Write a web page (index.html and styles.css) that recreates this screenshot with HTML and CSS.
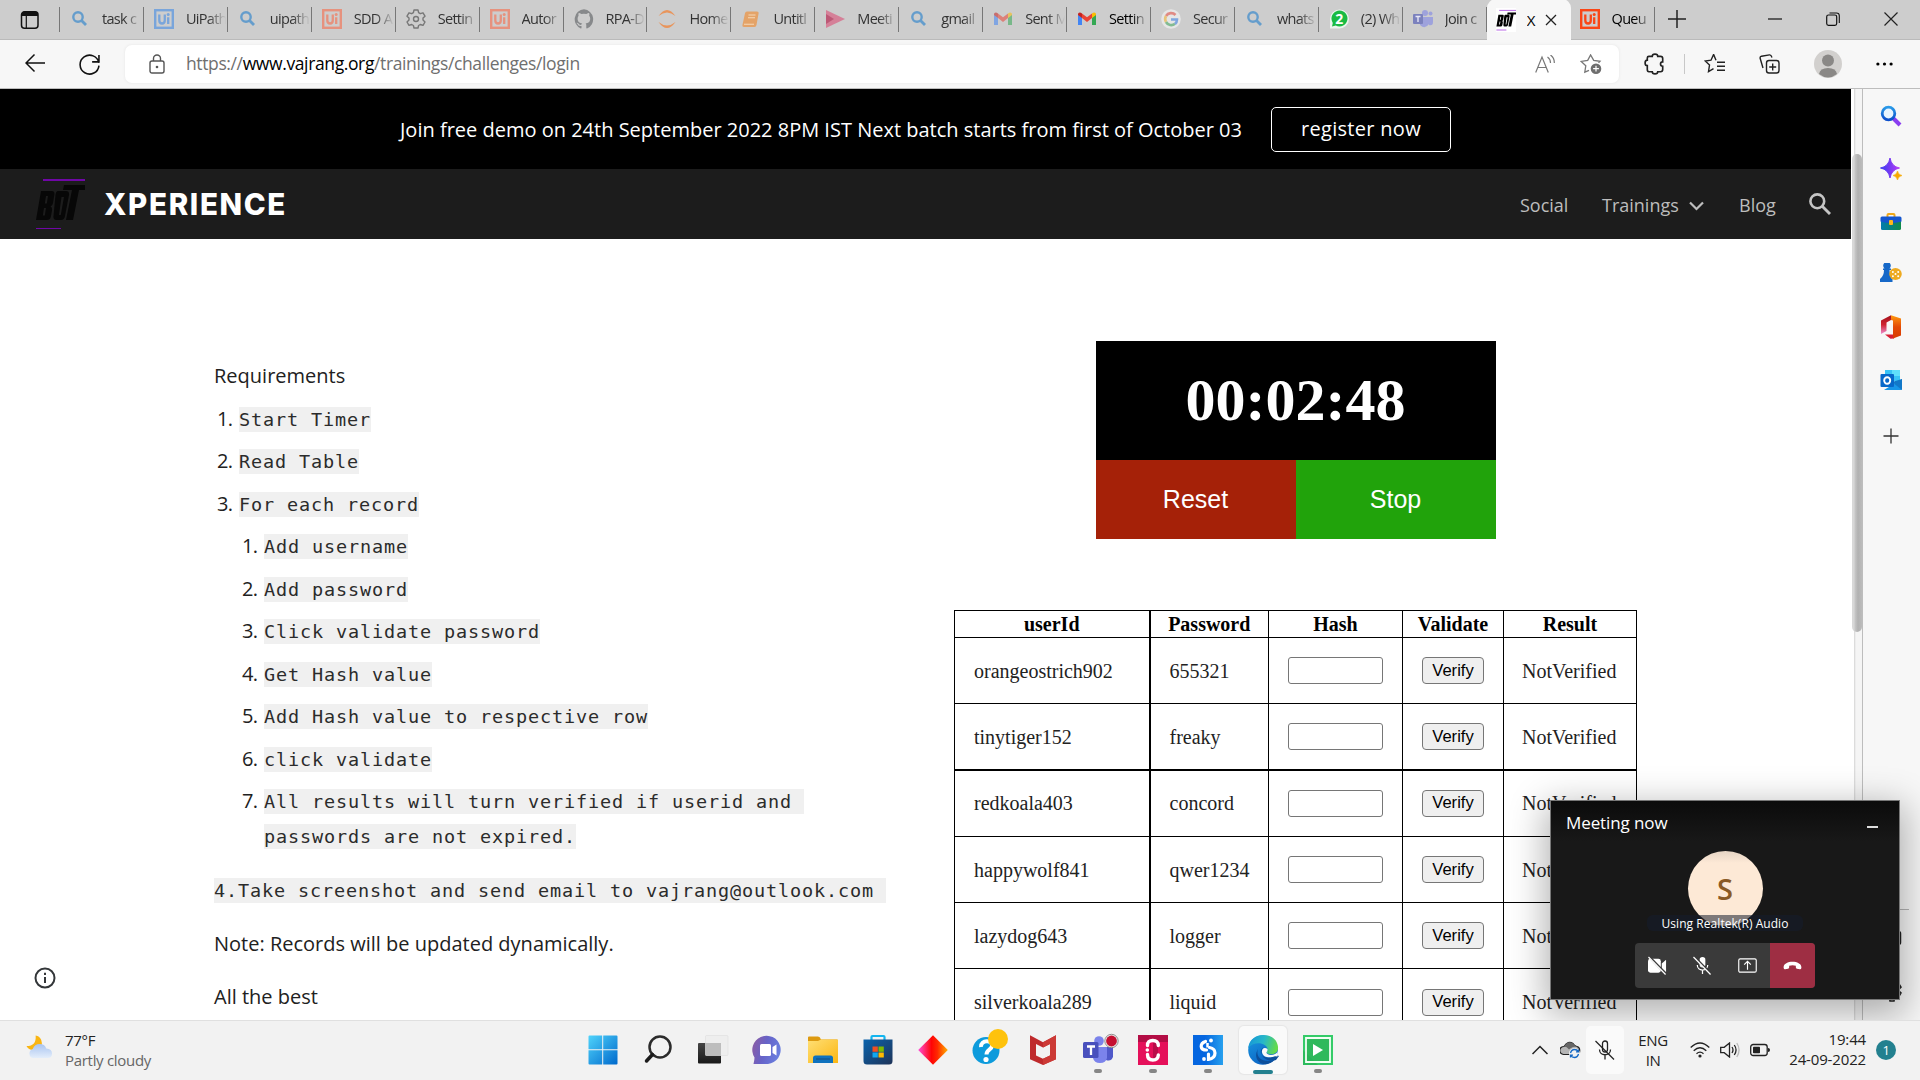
FILE: index.html
```html
<!DOCTYPE html>
<html lang="en">
<head>
<meta charset="utf-8">
<title>Xperience - Login challenge</title>
<link rel="stylesheet" href="styles.css">
</head>
<body>
<svg class="defs" width="0" height="0" aria-hidden="true">
  <defs>
    <linearGradient id="gWin" x1="0" y1="0" x2="1" y2="1"><stop offset="0" stop-color="#4fd3fb"/><stop offset="1" stop-color="#0069cc"/></linearGradient>
    <linearGradient id="gDark" x1="0" y1="0" x2="0" y2="1"><stop offset="0" stop-color="#454545"/><stop offset="1" stop-color="#191919"/></linearGradient>
    <linearGradient id="gChat" x1="0" y1="0.3" x2="1" y2="0.6"><stop offset="0" stop-color="#8a5ca6"/><stop offset="0.45" stop-color="#6663c8"/><stop offset="1" stop-color="#6a80e0"/></linearGradient>
    <linearGradient id="gFold" x1="0" y1="0" x2="1" y2="1"><stop offset="0" stop-color="#ffdf75"/><stop offset="1" stop-color="#fbb612"/></linearGradient>
    <linearGradient id="gStore" x1="0" y1="0" x2="1" y2="1"><stop offset="0" stop-color="#0b64ad"/><stop offset="1" stop-color="#1e3358"/></linearGradient>
    <linearGradient id="gDia" x1="0" y1="0" x2="1" y2="0"><stop offset="0" stop-color="#ff4fd8"/><stop offset="0.45" stop-color="#ff0505"/><stop offset="0.65" stop-color="#ff2a00"/><stop offset="1" stop-color="#ffb000"/></linearGradient>
    <linearGradient id="gEdgeTop" x1="0" y1="0.3" x2="1" y2="0.5"><stop offset="0" stop-color="#1797d8"/><stop offset="0.5" stop-color="#27b8c8"/><stop offset="1" stop-color="#66dc44"/></linearGradient>
    <linearGradient id="gEdge" x1="0" y1="0" x2="0.6" y2="1"><stop offset="0" stop-color="#1a9ae0"/><stop offset="1" stop-color="#0b62c4"/></linearGradient>
    <linearGradient id="gSpark" x1="0" y1="0" x2="1" y2="0"><stop offset="0" stop-color="#3a3af0"/><stop offset="1" stop-color="#b63cf5"/></linearGradient>
    <linearGradient id="gLens" x1="0" y1="0" x2="0" y2="1"><stop offset="0" stop-color="#2a9ae8"/><stop offset="1" stop-color="#0b4ecb"/></linearGradient>
    <linearGradient id="gCase" x1="0" y1="0" x2="1" y2="0"><stop offset="0" stop-color="#007bb0"/><stop offset="1" stop-color="#108a4a"/></linearGradient>
    <linearGradient id="gOffL" x1="0" y1="0" x2="0" y2="1"><stop offset="0" stop-color="#a3121c"/><stop offset="0.5" stop-color="#cf2330"/><stop offset="1" stop-color="#ee8fd0"/></linearGradient>
    <linearGradient id="gOffR" x1="0" y1="0" x2="0" y2="1"><stop offset="0" stop-color="#ff9a10"/><stop offset="0.5" stop-color="#e34a06"/><stop offset="1" stop-color="#d83b01"/></linearGradient>
    <linearGradient id="gCloud" x1="0" y1="0" x2="0" y2="1"><stop offset="0" stop-color="#a9c4f0"/><stop offset="1" stop-color="#e4eefb"/></linearGradient>
    <linearGradient id="gBlue" x1="0" y1="0" x2="1" y2="0"><stop offset="0.4" stop-color="#0566e0"/><stop offset="1" stop-color="#27a0ee"/></linearGradient>
    <symbol id="i-find" viewBox="0 0 20 20"><circle cx="8" cy="8" r="4.7" fill="none" stroke="#659dcc" stroke-width="2.4"/><path d="M11.5 11.5l4.5 4.5" stroke="#659dcc" stroke-width="2.8"/></symbol>
    <symbol id="i-ui" viewBox="0 0 20 20"><rect x="1.2" y="1.2" width="17.6" height="17.6" fill="none" stroke="currentColor" stroke-width="2.4"/><path d="M5.3 5.5v5.7c0 4.4 5.5 4.4 5.5 0V5.5M14.2 8.3v6.6" fill="none" stroke="currentColor" stroke-width="2.3"/><circle cx="14.2" cy="5.6" r="1.5" fill="currentColor"/></symbol>
    <symbol id="i-gmail" viewBox="0 0 20 20"><path d="M1 5v11h4V8.5z" fill="#4285f4"/><path d="M15 8.5V16h4V5z" fill="#34a853"/><path d="M5 9V4.5l5 3.8 5-3.8V9l-5 4z" fill="#ea4335"/><path d="M15 9V4.5c2-2 4-1 4 1V6z" fill="#fbbc04"/><path d="M5 9V4.5c-2-2-4-1-4 1V6z" fill="#c5221f"/></symbol>
    <symbol id="i-bot" viewBox="0 0 50 50"><path d="M8 1h43M1 50h25" stroke="#8a00d4" stroke-width="1.500"/><path fill-rule="evenodd" fill="currentColor" d="M6 12h11q3 0 2.300 4l-1.300 8q-.5 3-2.500 3.500q2 .8 1.500 4l-1.200 6.500q-.7 3-4 3H1zM11 17l-1.200 7.500h2L13 17zM9 29l-1.200 7.500h2L11 29zM23 12h8q3.500 0 3 4l-4 21q-.7 4-4 4h-4.500q-3.500 0-3-4l2-21q.5-4 2.500-4zM26.500 18l-2.500 18h1.800L29 18zM29 6h22l-1 5h-6l-6 30h-7l6-30h-9z"/></symbol>
    <symbol id="i-mic" viewBox="0 0 20 20"><rect x="7" y="1" width="6" height="11" rx="3" fill="currentColor"/><path d="M4.5 9.5c0 7 11 7 11 0M10 15v4" stroke="currentColor" stroke-width="1.3" fill="none"/></symbol>
  </defs>
</svg>

<div class="browser">
  <header class="tabs">
    <div class="tab-actions"><svg width="20" height="20" viewBox="0 0 20 20"><rect x="1.500" y="1.800" width="16.500" height="16.500" rx="3" fill="none" stroke="#111" stroke-width="1.500"/><path d="M1.500 6V4q0-2.500 3-2.500h10.500q3 0 3 2.500v2zM5.700 6h1.200v12H5.700z" fill="#111"/></svg></div>
    <div class="tab asleep"><svg><use href="#i-find"/></svg><span>task c</span></div>
    <div class="tab asleep ui-blue"><svg><use href="#i-ui"/></svg><span>UiPath</span></div>
    <div class="tab asleep"><svg><use href="#i-find"/></svg><span>uipath</span></div>
    <div class="tab asleep ui-faded"><svg><use href="#i-ui"/></svg><span>SDD A</span></div>
    <div class="tab asleep"><svg viewBox="0 0 20 20"><path d="M8 1h4l.6 2.700 1.700 1 2.700-.9 2 3.400-2 1.900v2l2 1.900-2 3.400-2.700-.9-1.700 1L12 19H8l-.6-2.500-1.700-1-2.700.9-2-3.400 2-1.900v-2L1 7.200l2-3.400 2.700.9 1.700-1z" fill="none" stroke="#777" stroke-width="1.400" stroke-linejoin="round"/><circle cx="10" cy="10" r="2.500" fill="none" stroke="#777" stroke-width="1.400"/></svg><span>Settin</span></div>
    <div class="tab asleep ui-faded"><svg><use href="#i-ui"/></svg><span>Autor</span></div>
    <div class="tab asleep"><svg viewBox="0 0 20 20"><path fill="#87898b" d="M10 .3a10 10 0 0 0-3.200 19.200c.5.1.7-.2.7-.5v-2c-2.800.6-3.400-1.200-3.400-1.200-.4-1.100-1.100-1.400-1.100-1.400-.9-.6.100-.6.100-.6 1 .1 1.500 1 1.500 1 .9 1.500 2.400 1.100 2.900.8.100-.6.400-1.100.7-1.300-2.200-.3-4.600-1.100-4.600-4.900 0-1.100.4-2 1-2.700-.1-.300-.4-1.300.1-2.700 0 0 .8-.3 2.700 1a9.400 9.400 0 0 1 5 0c1.900-1.300 2.700-1 2.700-1 .5 1.400.2 2.400.1 2.700.6.700 1 1.600 1 2.700 0 3.800-2.300 4.700-4.600 4.900.4.300.7.900.7 1.900v2.800c0 .3.200.6.700.5A10 10 0 0 0 10 .3z"/></svg><span>RPA-D</span></div>
    <div class="tab asleep"><svg viewBox="0 0 20 20"><path d="M1.500 7Q10-5 18.500 7 10 0 1.500 7zM1.500 13Q10 25 18.500 13 10 20 1.500 13z" fill="#e8955c"/></svg><span>Home</span></div>
    <div class="tab asleep"><svg viewBox="0 0 20 20"><path d="M6 2.500h10q2 0 1.600 1.800L15.500 16q-.4 2-2 2H3q-2 0-1.600-1.800L4 4.200q.4-1.700 2-1.700z" fill="#e4a368"/><path d="M7.500 6h7M7 8.800h7M3 15.300h10" stroke="#f5d9b8" stroke-width="1.100"/></svg><span>Untitl</span></div>
    <div class="tab asleep"><svg viewBox="0 0 20 20"><path d="M1 1l19 9-19 9z" fill="#d58098"/><path d="M1 5l8 5-8 5z" fill="#bd5876"/></svg><span>Meeti</span></div>
    <div class="tab asleep"><svg><use href="#i-find"/></svg><span>gmail</span></div>
    <div class="tab asleep"><svg class="dim"><use href="#i-gmail"/></svg><span>Sent M</span></div>
    <div class="tab"><svg><use href="#i-gmail"/></svg><span>Settin</span></div>
    <div class="tab asleep"><svg viewBox="0 0 20 20"><circle cx="10" cy="10" r="9.800" fill="#e6e6e6"/><g fill="none" stroke-width="2.600"><path d="M14.500 6A6 6 0 0 0 5 7" stroke="#e08a84"/><path d="M5 7a6 6 0 0 0 0 6" stroke="#e8c47a"/><path d="M5 13a6 6 0 0 0 9 1.800" stroke="#83bb92"/><path d="M14 15a6 6 0 0 0 2-4.500h-6" stroke="#7fa6e0"/></g></svg><span>Secur</span></div>
    <div class="tab asleep"><svg><use href="#i-find"/></svg><span>whats</span></div>
    <div class="tab asleep"><svg viewBox="0 0 20 20"><path d="M1 19.500V10A9.500 9.500 0 1 1 10 19.500H6z" fill="#eaf5ed"/><path d="M3 17.500l.8-3.600a8 8 0 1 1 3 2.700z" fill="#19bb43"/><text x="10" y="14.800" text-anchor="middle" font-family="Open Sans, sans-serif" font-weight="700" font-size="14" fill="#fff">2</text></svg><span>(2) Wh</span></div>
    <div class="tab asleep"><svg viewBox="0 0 20 20"><circle cx="12" cy="4" r="3" fill="#9ea2dc"/><circle cx="17.500" cy="4.500" r="2" fill="#9ea2dc"/><path d="M7 8h9v7q-4 6-9 1zM16 8h4v5q0 4-4 3z" fill="#9ea2dc"/><rect y="5" width="10" height="10" rx="1" fill="#7b81bd"/><path d="M2.500 7.500h5M5 7.500V13" stroke="#e6e6f5" stroke-width="1.400"/></svg><span>Join c</span></div>
    <div class="tab active"><svg class="bot-fav"><use href="#i-bot"/></svg><span>X</span><svg class="tab-close" viewBox="0 0 12 12"><path d="M1 1l10 10M11 1L1 11" stroke="#222" stroke-width="1.300"/></svg></div>
    <div class="tab ui-live"><svg><use href="#i-ui"/></svg><span>Queu</span></div>
    <svg class="new-tab" viewBox="0 0 18 18"><path d="M9 0v18M0 9h18" stroke="#222" stroke-width="1.500"/></svg>
    <div class="window-buttons">
      <svg viewBox="0 0 14 14"><path d="M0 7h14" stroke="#111" stroke-width="1.200"/></svg>
      <svg viewBox="0 0 14 14"><rect x=".7" y="3" width="10" height="10.300" rx="1.800" fill="none" stroke="#111" stroke-width="1.200"/><path d="M3.500 1h7q2.800 0 2.800 2.800V11" fill="none" stroke="#111" stroke-width="1.100"/></svg>
      <svg viewBox="0 0 14 14"><path d="M.5.5l13 13M13.500.5l-13 13" stroke="#222" stroke-width="1.200"/></svg>
    </div>
  </header>

  <div class="toolbar">
    <svg class="back" viewBox="0 0 20 20"><path d="M20 10H1M9.500 1.500L1 10l8.500 8.500" fill="none" stroke="#111" stroke-width="1.500"/></svg>
    <svg class="reload" viewBox="0 0 20 20"><path d="M18.900 8.500A9 9 0 1 0 19 11M19 1v6.500h-6.500" fill="none" stroke="#111" stroke-width="1.500"/></svg>
    <div class="address">
      <svg class="lock" viewBox="0 0 16 20"><rect x="1" y="7" width="14" height="12" rx="2" fill="none" stroke="#555" stroke-width="1.400"/><path d="M4.500 7V4.500a3.500 3.500 0 0 1 7 0V7" fill="none" stroke="#555" stroke-width="1.400"/><circle cx="8" cy="13" r="1.300" fill="#555"/></svg>
      <span class="url">https://<b>www.vajrang.org</b>/trainings/challenges/login</span>
      <svg class="read" viewBox="0 0 20 18"><path d="M.7 17.500L7 2l6.300 15.500M3 12.500h8M12.500 2q3 2 3 6M15.500 0q4 3 3.800 8" fill="none" stroke="#777" stroke-width="1.200"/></svg>
      <svg class="fav" viewBox="0 0 22 20"><path d="M18.500 8.800L20 7.300l-6.300-.9L10.600.9 7.700 6.400l-6.500 1 4.600 4.300-1 6.500L9 16.300" fill="none" stroke="#777" stroke-width="1.300"/><circle cx="16" cy="14.700" r="5.300" fill="#6e6e6e"/><path d="M16 11.800v5.800M13.100 14.700h5.800" stroke="#fff" stroke-width="1.200"/></svg>
    </div>
    <svg class="ext" viewBox="0 0 20 20"><path d="M4 3h3.500a2.500 2 0 0 1 5 0H15q2 0 2 2v3a2 2 0 0 0 0 4v3q0 2-2 2h-2.500a2.500 2 0 0 1-5 0H4.500q-1.500 0-1.500-2v-3.500a2 2.500 0 0 1 0-5V4.500Q3 3 4.500 3" fill="none" stroke="#222" stroke-width="1.500"/></svg>
    <i class="rule"></i>
    <svg class="favs" viewBox="0 0 21 20"><path d="M12 7L9.600 1.200 7 7l-5.800.8 4.300 4L4.500 18.500 9.500 15.500M13 9h8M13 13h8M13 17h8" transform="translate(0 -.8)" fill="none" stroke="#222" stroke-width="1.400"/></svg>
    <svg class="coll" viewBox="0 0 21 20"><rect x="7.500" y="6.500" width="12.500" height="12.500" rx="2.500" fill="none" stroke="#222" stroke-width="1.400"/><path d="M13.700 9.500v7M10.200 13h7M4 14L1.200 4.500q-.5-1.800 1.300-2.300L10.500.9q1.500-.2 2.500 2.500" fill="none" stroke="#222" stroke-width="1.400"/></svg>
    <svg class="avatar" viewBox="0 0 28 28"><circle cx="14" cy="14" r="14" fill="#d2d0ce"/><circle cx="14" cy="10.500" r="6" fill="#8a8886"/><path d="M5 24q1-6 9-6t9 6q-9 7-18 0z" fill="#8a8886"/></svg>
    <svg class="more" viewBox="0 0 18 4"><circle cx="2" cy="2" r="1.700"/><circle cx="9" cy="2" r="1.700"/><circle cx="16" cy="2" r="1.700"/></svg>
  </div>

  <div class="viewport">
    <main class="site">
      <div class="banner"><span>Join free demo on 24th September 2022 8PM IST Next batch starts from first of October 03</span><a class="register">register now</a></div>
      <nav class="nav">
        <svg class="logo" viewBox="0 0 50 50"><use href="#i-bot"/></svg>
        <h1>XPERIENCE</h1>
        <a class="social">Social</a>
        <a class="trainings">Trainings</a>
        <svg class="chev" viewBox="0 0 15 10"><path d="M1 1.500l6.500 6.500L14 1.500" fill="none" stroke="#bdbdbd" stroke-width="2.200"/></svg>
        <a class="blog">Blog</a>
        <svg class="site-search" viewBox="0 0 22 22"><circle cx="8.300" cy="8.300" r="6.900" fill="none" stroke="#c4c4c4" stroke-width="2.600"/><path d="M13 13l8 8" stroke="#c4c4c4" stroke-width="2.900"/></svg>
      </nav>
      <div class="content">
        <section class="text">
          <p class="lead">Requirements</p>
          <ol>
            <li><code>Start Timer</code></li>
            <li><code>Read Table</code></li>
            <li><code>For each record</code>
              <ol>
                <li><code>Add username</code></li>
                <li><code>Add password</code></li>
                <li><code>Click validate password</code></li>
                <li><code>Get Hash value</code></li>
                <li><code>Add Hash value to respective row</code></li>
                <li><code>click validate</code></li>
                <li><code>All results will turn verified if userid and <br>passwords are not expired.</code></li>
              </ol>
            </li>
          </ol>
          <p class="mail"><code>4.Take screenshot and send email to vajrang@outlook.com </code></p>
          <p class="note">Note: Records will be updated dynamically.</p>
          <p class="best">All the best</p>
        </section>
        <svg class="info" viewBox="0 0 22 22"><circle cx="11" cy="11" r="9.500" fill="none" stroke="#333639" stroke-width="2"/><path d="M11 10v6M11 5.800v2.100" stroke="#333639" stroke-width="2"/></svg>
        <section class="challenge">
          <div class="timer">
            <div class="time">00:02:48</div>
            <button class="reset">Reset</button><button class="stop">Stop</button>
          </div>
          <table>
            <thead><tr><th>userId</th><th>Password</th><th>Hash</th><th>Validate</th><th>Result</th></tr></thead>
            <tbody>
              <tr><td>orangeostrich902</td><td>655321</td><td><input></td><td><button>Verify</button></td><td>NotVerified</td></tr>
              <tr class="thick"><td>tinytiger152</td><td>freaky</td><td><input></td><td><button>Verify</button></td><td>NotVerified</td></tr>
              <tr><td>redkoala403</td><td>concord</td><td><input></td><td><button>Verify</button></td><td>NotVerified</td></tr>
              <tr><td>happywolf841</td><td>qwer1234</td><td><input></td><td><button>Verify</button></td><td>NotVerified</td></tr>
              <tr><td>lazydog643</td><td>logger</td><td><input></td><td><button>Verify</button></td><td>NotVerified</td></tr>
              <tr><td>silverkoala289</td><td>liquid</td><td><input></td><td><button>Verify</button></td><td>NotVerified</td></tr>
            </tbody>
          </table>
        </section>
      </div>
    </main>
    <div class="scroll"><i></i></div>
    <aside class="sidebar">
      <svg viewBox="0 0 22 22"><path d="M13 13l7 7" stroke="#8a3df0" stroke-width="4"/><circle cx="8.500" cy="8.500" r="6.300" fill="#e8f5ff" stroke="url(#gLens)" stroke-width="2.800"/></svg>
      <svg viewBox="0 0 22 22"><path d="M10 0q1.500 8.500 9.500 10-8 1.500-9.500 10Q8.500 11.500.5 10 8.500 8.500 10 0z" fill="url(#gSpark)" stroke="url(#gSpark)"/><path d="M17.500 13q.8 4 4.500 4.500-3.700.7-4.500 4.500-.8-3.800-4.500-4.500 3.700-.7 4.500-4.500z" fill="#f7a900" stroke="#f7a900" stroke-width=".6"/></svg>
      <svg viewBox="0 0 22 22"><path d="M7.500 6V4q0-1 1-1h5q1 0 1 1v2" fill="none" stroke="#f0a818" stroke-width="2"/><rect x="1" y="9" width="20" height="10" rx="1.500" fill="url(#gCase)"/><path d="M.5 7q0-1.500 1.500-1.500h18q1.500 0 1.500 1.500v3.500q-10.500 3-21 0z" fill="#1556cf"/><rect x="9" y="9" width="4" height="5" rx="1" fill="#ffb71b"/></svg>
      <svg viewBox="0 0 22 22"><path d="M4 7H3V5.500h1.500a3.800 3.800 0 1 1 5 0H11V7h-1.500q0 5 3 8v4H0v-3q4-3 4-9z" fill="#1668c8"/><ellipse cx="15.500" cy="11" rx="6.300" ry="6" fill="#eeaa20"/><g fill="#fff"><circle cx="15.500" cy="11" r="1"/><circle cx="12.900" cy="9" r="1"/><circle cx="18.200" cy="9" r="1"/><circle cx="12.900" cy="13.300" r="1"/><circle cx="18.200" cy="13.300" r="1"/></g></svg>
      <svg class="office" viewBox="0 0 22 24"><path d="M1 5.500L11 .3v4.800L6.500 7.500V16L1 19z" fill="url(#gOffL)"/><path d="M5 19.500h8v-2l3-1-2 7-3.500.2z" fill="#d71f35"/><path d="M11 .3l10 3.200v17L13 23.600V5.500L11 5z" fill="url(#gOffR)"/></svg>
      <svg viewBox="0 0 22 22"><path d="M5 1h14q1 0 1 1v10H5z" fill="#39c4f6"/><path d="M12 1h7q1 0 1 1v5h-8z" fill="#5fe0fb"/><path d="M4 21l18-11v10q0 1-1 1z" fill="#1896e8"/><path d="M12 13l10 8V10z" fill="#1278c8"/><rect x=".5" y="5" width="13.500" height="13" rx="1" fill="#0768c9"/><ellipse cx="7.200" cy="11.500" rx="3" ry="3.300" fill="none" stroke="#fff" stroke-width="1.900"/></svg>
      <svg class="plus" viewBox="0 0 22 22"><path d="M11 3.500v15M3.500 11h15" stroke="#333" stroke-width="1.300"/></svg>
      <i class="side-rule"></i>
      <svg class="side-panel" viewBox="0 0 22 22"><rect x="1.500" y="4.500" width="18" height="13" rx="2" fill="none" stroke="#222" stroke-width="1.500"/></svg>
      <svg class="side-gear" viewBox="0 0 22 22"><path d="M9 1h4l.6 2.700 1.700 1 2.700-.9 2 3.400-2 1.900v2l2 1.900-2 3.400-2.700-.9-1.700 1L13 21H9l-.6-3.500-1.700-1-2.700.9-2-3.400 2-1.900v-2L2 8l2-3.400 2.700.9 1.700-1z" fill="none" stroke="#222" stroke-width="1.500"/></svg>
    </aside>
  </div>
</div>

<div class="meeting">
  <div class="meet-title"><span>Meeting now</span><i></i></div>
  <div class="person">S</div>
  <div class="device">Using Realtek(R) Audio</div>
  <div class="controls">
    <div><svg viewBox="0 0 20 20"><rect x="0" y="3" width="13.500" height="14.500" rx="2.500" fill="#fff"/><path d="M14.500 8l4.500-4v13l-4.500-4z" fill="#fff"/><path d="M1 .5l18.500 19" stroke="#3a3a3a" stroke-width="2.600"/><path d="M.5 1l18 18.500" stroke="#fff" stroke-width="1.300"/></svg></div>
    <div><svg viewBox="0 0 20 20"><use href="#i-mic"/><path d="M1 .5l18.500 19" stroke="#3a3a3a" stroke-width="2.600"/><path d="M.5 1l18 18.500" stroke="#fff" stroke-width="1.300"/></svg></div>
    <div><svg viewBox="0 0 20 20"><rect x=".8" y="3" width="18.400" height="14" rx="1.500" fill="none" stroke="#fff" stroke-width="1.200"/><path d="M10 14.500V6M6.500 9L10 5.500 13.500 9" fill="none" stroke="#fff" stroke-width="1.200"/></svg></div>
    <div class="hang"><svg viewBox="0 0 20 20"><path d="M.7 12.700C-.5 4 20.500 4 19.300 12.700q-.3 1.500-1.600 1.200l-3-.6q-1.200-.3-1.200-1.500v-1.500q-3.500-1-7 0v1.500q0 1.200-1.200 1.500l-3 .6q-1.300.3-1.600-1.200z" fill="#fff"/></svg></div>
  </div>
</div>

<footer class="taskbar">
  <svg class="weather" viewBox="0 0 28 24"><path d="M10 0q6 1 6.500 8 0 6-7 7Q3 16 .5 11 11 11 10 0z" fill="#f9b513"/><path d="M7 23.500a5 5 0 0 1 0-9.500q2-5 7-5 5.500 0 7 4.500 6 .5 6 5.300 0 4.700-5 4.700z" fill="url(#gCloud)"/></svg>
  <div class="forecast"><span>77°F</span><span>Partly cloudy</span></div>
  <div class="apps">
    <div><svg viewBox="0 0 30 30"><path d="M.5 1.500q0-1 1-1h12.700v13.700H.5zM15.200.5h13.300q1 0 1 1v12.700H15.200zM.5 15.200h13.700v14.300H1.500q-1 0-1-1zM15.200 15.200h14.300v13.300q0 1-1 1H15.200z" fill="url(#gWin)"/></svg></div>
    <div><svg viewBox="0 0 30 30"><circle cx="17" cy="12" r="10.500" fill="#f3f3f3" stroke="#2c2c2c" stroke-width="2.500"/><path d="M9.500 19.500L3.500 26" stroke="#1c1c1c" stroke-width="3.500" stroke-linecap="round"/></svg></div>
    <div><svg viewBox="0 0 30 30"><rect x="0" y="8" width="23" height="20.500" rx="1" fill="url(#gDark)"/><rect x="7.500" y=".5" width="22.500" height="20" rx="1" fill="#eee" stroke="#ddd" stroke-width=".6"/><path d="M7.500 8H23v12.500H7.500z" fill="#bdbdbd"/></svg></div>
    <div><svg viewBox="0 0 30 30"><path d="M.5 29q1-4 1-6.500A14.200 14.200 0 1 1 15 29z" fill="url(#gChat)"/><rect x="7" y="9" width="11" height="12" rx="1.500" fill="#fff"/><path d="M19.500 12l4-2.500v11l-4-2.500z" fill="#fff"/></svg></div>
    <div><svg viewBox="0 0 30 30"><path d="M0 2.500q0-1 1-1h9q2 0 3 3h16q1 0 1 1V15H0z" fill="#dd9a10"/><path d="M0 6h10l3-1.500h16q1 0 1 1V28H0z" fill="url(#gFold)"/><path d="M5 28v-5q0-2.500 2.500-2.500h15Q25 20.500 25 23v5z" fill="#0f72be"/><path d="M8 24h14" stroke="#174a7c" stroke-width="1"/></svg></div>
    <div><svg viewBox="0 0 30 30"><path d="M8.500 5V2q0-1 1-1h11q1 0 1 1v3" fill="none" stroke="#13b5ef" stroke-width="2.200"/><path d="M.5 4.500h29V26q0 3.500-3.500 3.500H4Q.5 29.500.5 26z" fill="url(#gStore)"/><path d="M9.500 11.500h5.300v5.300H9.500z" fill="#f25022"/><path d="M15.500 11.500h5.300v5.300h-5.300z" fill="#7fba00"/><path d="M9.500 17.500h5.300v5H9.500z" fill="#12a7ef"/><path d="M15.500 17.500h5.300v5h-5.300z" fill="#ffb900"/></svg></div>
    <div><svg viewBox="0 0 30 30"><path d="M15 .2L29.800 15 15 29.800.2 15z" fill="url(#gDia)"/></svg></div>
    <div><svg viewBox="0 0 30 30"><circle cx="13" cy="15.500" r="13.500" fill="#0d9bdc"/><path d="M8 12c-.5-7.500 12-7.500 11-1-.5 4-5.500 3.500-5.500 8.500" fill="none" stroke="#fff" stroke-width="4"/><circle cx="13" cy="24.500" r="2.600" fill="#fff"/><circle cx="25" cy="4" r="10" fill="#fec20c"/></svg></div>
    <div><svg viewBox="0 0 30 30"><path d="M2 .2l13 7 13-7v24L15 30 2 24.200zM8 9v11.500l7 3.300 7-3.300V9l-7 3.500z" fill="#bf2a2c" fill-rule="evenodd"/><path d="M15 7.200l13-7v24L15 30v-6.200l7-3.300V9l-7 3.500z" fill="#cc3a36"/></svg></div>
    <div class="open"><svg viewBox="0 0 30 30"><circle cx="16" cy="6" r="4.800" fill="#7b83eb"/><path d="M21 12h9v10q-2 5-7 3z" fill="#5059c9"/><path d="M10 12h14v11q-1 5-7 5t-7-5z" fill="#7b83eb"/><rect x="0" y="7" width="15.500" height="16" rx="1.500" fill="#4950bd"/><path d="M4 11.500h8M8 11.500V20" stroke="#fff" stroke-width="2.300"/><circle cx="28.500" cy="6" r="6.700" fill="#eee" stroke="#777" stroke-width=".8"/><circle cx="28.500" cy="6" r="5.400" fill="#c50f30"/></svg></div>
    <div class="open"><svg viewBox="0 0 30 30"><path d="M0 0h30v30H0z" fill="#e5105a"/><path d="M0 0h30v7H0z" fill="#b30d45"/><path d="M15 7h5v16h-5z" fill="#b90d49"/><path d="M20.300 10.500q0-5-5.500-5t-5.300 5M9.500 19.500q0 5.500 5.300 5.500t5.500-5" fill="none" stroke="#fff" stroke-width="3.400" stroke-linecap="round"/><circle cx="9.300" cy="15" r="1.800" fill="#fff"/></svg></div>
    <div class="open"><svg viewBox="0 0 30 30"><path d="M0 0h30v30H0z" fill="url(#gBlue)"/><path d="M12.500 6.500Q8 8 8.200 11.500q.3 3.500 5.300 3.500M16.500 12.500q5.500 1 5.500 5.500 0 5.500-6.500 6.300V19" fill="none" stroke="#fff" stroke-width="3.200" stroke-linecap="round"/><path d="M14.500 8v4.500" stroke="#fff" stroke-width="2.500"/><circle cx="18" cy="5.500" r="1.900" fill="#fff"/><circle cx="11" cy="24" r="1.900" fill="#fff"/></svg></div>
    <div class="open current"><svg viewBox="0 0 30 30"><circle cx="15" cy="15" r="14.800" fill="url(#gEdge)"/><path d="M.3 13C1.500-4.500 30-4 30 13c0 6-7 7.500-10.500 5.500-2-1.500 0-2 0-4.500C19 8.500 7 5 .3 13z" fill="url(#gEdgeTop)"/><path d="M10 14c-3 8 5 15.500 17 10.500C17 35 3 26 10 14z" fill="#0c4f9b"/><path d="M16 12c-3 1.500-4.500 5-2 8 3 3.500 9 3.500 14 0l3 1-3 4q-4 1-8 0c-6-1.500-9-8-4-13z" fill="#0c4f9b"/><path d="M19.500 14c.3 3-2.500 3.500 0 5 3 2 9 .5 10-2.500v5l-2.500-.2c-5 2-12 1.500-13-4-.5-3 2-5.800 5.500-3.300z" fill="#fafafa"/></svg></div>
    <div class="open"><svg viewBox="0 0 30 30"><path d="M0 0h30v30H0z" fill="#34cb68"/><path d="M3 3h24v24H3z" fill="#2fb95c"/><path d="M0 15L15 30H0z" fill="#27b155" opacity=".6"/><path d="M3 3h24v24H3z" fill="none" stroke="#f2fff5" stroke-width="1.800"/><path d="M10 9l10 6-10 6z" fill="#fff"/></svg></div>
  </div>
  <div class="tray">
    <svg class="up" viewBox="0 0 16 10"><path d="M.5 9L8 1.500 15.500 9" fill="none" stroke="#222" stroke-width="1.500"/></svg>
    <svg class="cloud" viewBox="0 0 21 18"><path d="M3.500 13.500A4 4 0 0 1 4 5.500Q8-1 13 2.500q2 3 4 3 3.500 1 2.500 6l-8 2z" fill="#b5b5b5" stroke="#222" stroke-width="1.200"/><path d="M4 5.500Q8-1 13 2.500q2 3 4 3-5 0-8 3-2-3-5-3z" fill="#666"/><circle cx="14.500" cy="12.500" r="5.500" fill="#f2f2f2"/><path d="M10.500 12q1-3.500 4-3.500 2.500 0 3.800 2M18.500 8.500v2.300h-2.500M18.500 13q-1 3.500-4 3.500-2.500 0-3.800-2M10.500 16.500v-2.300H13" fill="none" stroke="#1669c5" stroke-width="1.300"/></svg>
    <div class="mic-tile"><svg viewBox="0 0 20 20"><rect x="7.500" y="1" width="5" height="11" rx="2.500" fill="none" stroke="#222" stroke-width="1.300"/><path d="M4.500 9.500c0 7 11 7 11 0M10 15v4.500" stroke="#222" stroke-width="1.300" fill="none"/><path d="M.5 1l18.500 18.500" stroke="#222" stroke-width="1.300"/></svg></div>
    <div class="lang">ENG<br>IN</div>
    <svg class="wifi" viewBox="0 0 20 16"><path d="M.7 5.500q9.300-9 18.600 0M3.700 8.800q6.300-6 12.600 0M6.500 11.700q3.500-3 7 0" fill="none" stroke="#222" stroke-width="1.300"/><circle cx="10" cy="14" r="1.600" fill="#222"/></svg>
    <svg class="vol" viewBox="0 0 20 16"><path d="M.7 5.300h3.500L9.500 1v14L4.200 10.700H.7zM12 5q2 3 0 6M14.300 3q3.500 5 0 10" fill="none" stroke="#222" stroke-width="1.300"/><path d="M16.800 1q4.500 7 0 14" fill="none" stroke="#bbb" stroke-width="1.300"/></svg>
    <svg class="bat" viewBox="0 0 20 14"><rect x=".7" y="1.500" width="16.500" height="11" rx="2.500" fill="none" stroke="#222" stroke-width="1.300"/><rect x="3" y="3.800" width="7" height="6.500" rx=".8" fill="#222"/><path d="M18 5q2 0 2 2t-2 2z" fill="#222"/></svg>
    <div class="clock">19:44<br>24-09-2022</div>
    <div class="badge">1</div>
  </div>
</footer>
</body>
</html>
```
FILE: styles.css
```css
* { box-sizing: border-box; }
html, body { margin: 0; height: 100%; overflow: hidden; }
body { display: flex; flex-direction: column; width: 1920px; height: 1080px; background: #fff; font-family: "Open Sans", sans-serif; color: #212121; }
svg { display: block; flex: none; }
.defs { position: absolute; }

.browser { height: 1020px; flex: none; display: flex; flex-direction: column; overflow: hidden; }

/* tab strip */
.tabs { height: 40px; flex: none; display: flex; align-items: flex-end; background: #cdcdcd; border-bottom: 1px solid #bababa; }
.tab-actions { width: 60px; height: 40px; padding: 11px 0 0 20px; }
.tab-actions::after, .tab::after { content: ""; position: absolute; right: 0; top: 8px; width: 1px; height: 25px; background: #777; }
.tab-actions, .tab { position: relative; flex: none; }
.tab { width: 83.93px; height: 40px; padding: 0 2px 0 10px; display: flex; align-items: center; font-size: 14.5px; letter-spacing: -.7px; color: #000; }
.tab svg { width: 20px; height: 20px; margin-right: 12px; }
.tab span { flex: 1; min-width: 0; overflow: hidden; white-space: nowrap; line-height: 24px; -webkit-mask-image: linear-gradient(90deg, #000 55%, transparent 100%); mask-image: linear-gradient(90deg, #000 55%, transparent 100%); }
.tab.asleep { color: #333; }
.tab .dim { opacity: .55; }
.ui-blue svg { color: #79a5db; }
.ui-faded svg { color: #e6927e; }
.ui-live svg { color: #fa4616; }
.tab.active { background: #f7f7f7; border-radius: 9px 9px 0 0; margin-bottom: -1px; height: 41px; padding-left: 9px; }
.tab.active::after { display: none; }
.tab.ui-live { padding-left: 9px; }
.tab .bot-fav { background: #fff; height: 24px; margin-right: 11px; }
.tab.active span { flex: none; width: 10px; font-size: 15px; -webkit-mask-image: none; mask-image: none; }
.tab .tab-close { width: 12px; height: 12px; margin: 1px 0 0 8px; }
.new-tab { width: 18px; height: 18px; margin: 0 0 11px 13px; }
.window-buttons { flex: 1; display: flex; justify-content: flex-end; gap: 44px; padding: 0 22px 13px 0; }
.window-buttons svg { width: 14px; height: 14px; }

/* toolbar */
.toolbar { height: 49px; flex: none; display: flex; align-items: center; background: #f7f7f7; border-bottom: 1px solid #bdbdbd; padding: 0 20px 0 25px; }
.back { width: 20px; height: 20px; margin: 0 34px 2px 0; }
.reload { width: 21px; height: 21px; margin-right: 25px; }
.address { width: 1494px; height: 38px; border-radius: 7px; background: #fff; display: flex; align-items: center; padding: 0 17px 0 24px; box-shadow: 0 0 3px #e4e4e4; }
.lock { width: 16px; height: 20px; margin-bottom: 1px; }
.url { flex: 1; margin: 0 0 2px 21px; font-size: 17.5px; letter-spacing: -.38px; color: #6f6f6f; }
.url b { font-weight: 400; color: #000; }
.read { width: 20px; height: 18px; margin-right: 25px; }
.fav { width: 22px; height: 20px; }
.ext { width: 22px; height: 22px; margin-left: 25px; }
.rule { width: 1px; height: 20px; background: #c8c8c8; margin-left: 18px; }
.favs { width: 21px; height: 20px; margin-left: 19px; }
.coll { width: 21px; height: 20px; margin-left: 34px; }
.avatar { width: 28px; height: 28px; margin-left: 34px; }
.more { width: 17px; height: 4px; margin-left: 34px; }

.viewport { flex: 1; min-height: 0; display: flex; }
.site { width: 1851px; flex: none; overflow: hidden; background: #fff; }
.scroll { width: 12px; flex: none; border-left: 1px solid #fff; border-right: 1px solid #bdbdbd; background: linear-gradient(90deg, #fff 2px, #d4d4d4 2px, #f5f5f5 4px); }
.scroll i { display: block; margin: 65px 0 0 0; height: 478px; border-radius: 5px; background: linear-gradient(90deg, #d8d8d8 2px, #c6c6c6 3px, #b1b1b1 6px, #bcbcbc); }

.banner { height: 80px; background: #000; color: #fff; display: flex; align-items: center; padding-left: 400px; font-size: 20px; white-space: nowrap; }
.banner span { width: 871px; flex: none; }
.register { width: 180px; height: 45px; border: 1px solid #fff; border-radius: 5px; display: flex; align-items: center; justify-content: center; padding-bottom: 2px; letter-spacing: .3px; }
.nav { height: 70px; background: #1c1c1c; display: flex; align-items: center; color: #bdbdbd; font-size: 18px; }
.logo { width: 50px; height: 50px; margin-left: 35px; color: #070707; overflow: visible; }
.nav h1 { margin: 0 0 1px 19px; width: 1416px; font: 800 29.5px "Inter", sans-serif; letter-spacing: 1.65px; color: #fff; }
.social { width: 82px; }
.trainings { width: 87px; }
.social, .trainings, .blog { padding-top: 2px; }
.chev { width: 15px; height: 10px; margin-top: 3px; }
.blog { width: 70px; margin-left: 35px; }
.site-search { width: 22px; height: 22px; margin-bottom: 1px; }

.content { position: relative; display: flex; height: 781px; }
.text { width: 954px; flex: none; padding: 119px 0 0 214px; font-size: 20px; line-height: 35px; }
.text p { margin: 0; height: 35px; }
.text ol { margin: 0; padding: 0; list-style: none; counter-reset: step; }
.text > ol { padding-left: 25px; }
.text ol ol { padding-left: 25px; }
.text li { counter-increment: step; margin-top: 7.45px; }
.text > ol > li:first-child { margin-top: 8px; }
.text li::before { content: counter(step) "."; float: left; width: 22px; margin-left: -22px; letter-spacing: -.6px; }
.text code { font-family: "DejaVu Sans Mono", monospace; font-size: 18.5px; line-height: 1; letter-spacing: .862px; background: #f0f0f0; padding: 2px 0; white-space: pre-wrap; color: #2b2b2b; }
.text .mail { margin-top: 19px; white-space: nowrap; }
.text .note { margin-top: 19px; }
.text .best { margin-top: 18px; }
.info { position: absolute; left: 34px; top: 728px; width: 22px; height: 22px; }

.challenge { padding-top: 102px; }
.timer { width: 400px; margin-left: 142px; display: grid; grid-template-columns: 1fr 1fr; }
.time { grid-column: 1 / 3; height: 119px; padding-right: 1px; background: #000; color: #fff; font: 700 60px/118px "Liberation Serif", serif; text-align: center; }
.timer button { height: 79px; border: 0; padding: 0 1px 0 0; color: #fff; font: 25px "Liberation Sans", sans-serif; }
.reset { background: #a52108; }
.stop { background: #21a30b; }
table { margin-top: 71px; width: 683px; table-layout: fixed; border-collapse: collapse; font: 20px "Liberation Serif", serif; color: #000; }
th, td { border: 1px solid #000; padding: 0; }
th { height: 27px; line-height: 22px; }
th:nth-child(1) { width: 195px; }
th:nth-child(2) { width: 119px; }
th:nth-child(3) { width: 134px; }
th:nth-child(4) { width: 101px; }
td { height: 66.3px; padding-left: 19px; line-height: 24px; color: #222; }
td:last-child { padding-left: 18px; }
th:first-child, td:first-child { border-right-width: 2px; }
.thick td { border-bottom-width: 2px; }
td input { display: block; width: 95px; height: 27px; border: 1px solid #767676; border-radius: 3px; padding: 0; background: #fff; }
td button { display: block; width: 62px; height: 27px; border: 1px solid #767676; border-radius: 4px; padding: 0; background: #efefef; font: 16.6px "Liberation Sans", sans-serif; color: #000; }

.sidebar { flex: 1; position: relative; background: #f7f7f7; display: flex; flex-direction: column; align-items: center; padding: 16px 2px 0 0; gap: 30.8px; }
.sidebar svg { width: 22px; height: 22px; }
.sidebar .office { height: 24px; margin: -1px 0; }
.sidebar .plus { margin-top: 3px; }
.side-rule { position: absolute; left: 18px; top: 820px; width: 28px; height: 1px; background: #b5b5b5; }
.sidebar .side-panel { position: absolute; left: 18px; top: 838px; }
.sidebar .side-gear { position: absolute; left: 18px; top: 891px; }

/* floating call window */
.meeting { position: absolute; left: 1551px; top: 801px; width: 348px; height: 198px; background: linear-gradient(#0b0b0b, #181818 40px); outline: 1px solid #777; box-shadow: 0 10px 34px 6px rgba(0,0,0,.3); display: flex; flex-direction: column; align-items: center; clip-path: inset(-50px -30px -21px -50px); }
.meet-title { width: 100%; height: 50px; padding: 8px 21px 0 15px; display: flex; justify-content: space-between; color: #fff; font-size: 17px; line-height: 27px; letter-spacing: -.1px; }
.meet-title i { width: 11px; height: 2px; background: #ddd; margin-top: 17px; }
.person { width: 75px; height: 75px; flex: none; border-radius: 50%; background: linear-gradient(#e6d5c4, #fde9d6 12px); color: #8a5a26; font-size: 29px; font-weight: 600; display: flex; align-items: center; justify-content: center; }
.device { width: 156px; height: 16px; flex: none; margin-top: -11px; border-radius: 6px; background: rgba(22,30,46,.55); color: #fff; font-size: 12px; line-height: 17px; letter-spacing: .05px; text-align: center; position: relative; white-space: nowrap; }
.controls { display: flex; margin-top: 12px; border-radius: 4px; overflow: hidden; background: #3a3a3a; }
.controls div { width: 45px; height: 45px; display: flex; align-items: center; justify-content: center; }
.controls svg { width: 19px; height: 19px; color: #fff; }
.controls .hang { background: #9e2e43; }

/* taskbar */
.taskbar { height: 60px; flex: none; display: flex; align-items: center; background: #f2f2f2; border-top: 1px solid #e0e0e0; padding-bottom: 1px; color: #222; font-size: 15px; line-height: 20px; letter-spacing: -.4px; }
.weather { width: 27px; height: 24px; margin: 0 0 6px 26px; }
.forecast { width: 508px; padding-left: 12px; margin-bottom: 1px; display: flex; flex-direction: column; color: #222; letter-spacing: -.3px; }
.forecast span + span { color: #666; }
.apps { display: flex; gap: 7px; width: 964px; margin-left: 18px; }
.apps div { position: relative; width: 48px; height: 48px; display: flex; align-items: center; justify-content: center; border-radius: 5px; }
.apps svg { width: 30px; height: 30px; overflow: visible; }
.apps .open::after { content: ""; position: absolute; left: 20px; bottom: 1px; width: 8px; height: 4px; border-radius: 2px; background: #868686; }
.apps .current { background: #fafafa; box-shadow: 0 0 1px 1px #e6e6e6; }
.apps .current::after { left: 14px; bottom: 0; width: 20px; background: #23808f; }
.tray { display: flex; align-items: center; margin-left: -11px; }
.up { width: 16px; height: 10px; }
.cloud { width: 21px; height: 18px; margin-left: 12px; }
.mic-tile { width: 38px; height: 48px; margin-left: 5px; border-radius: 5px; background: #fafafa; display: flex; align-items: center; justify-content: center; }
.mic-tile svg { width: 20px; height: 20px; }
.lang { width: 58px; text-align: center; margin-bottom: 1px; }
.wifi { width: 20px; height: 16px; margin-left: 8px; }
.vol { width: 20px; height: 16px; margin-left: 10px; }
.bat { width: 20px; height: 14px; margin-left: 10px; }
.clock { width: 96px; text-align: right; margin-bottom: 2px; letter-spacing: -.15px; }
.badge { width: 20px; height: 20px; border-radius: 50%; margin-left: 10px; background: #23808f; color: #fff; font-size: 13px; text-align: center; }
```
